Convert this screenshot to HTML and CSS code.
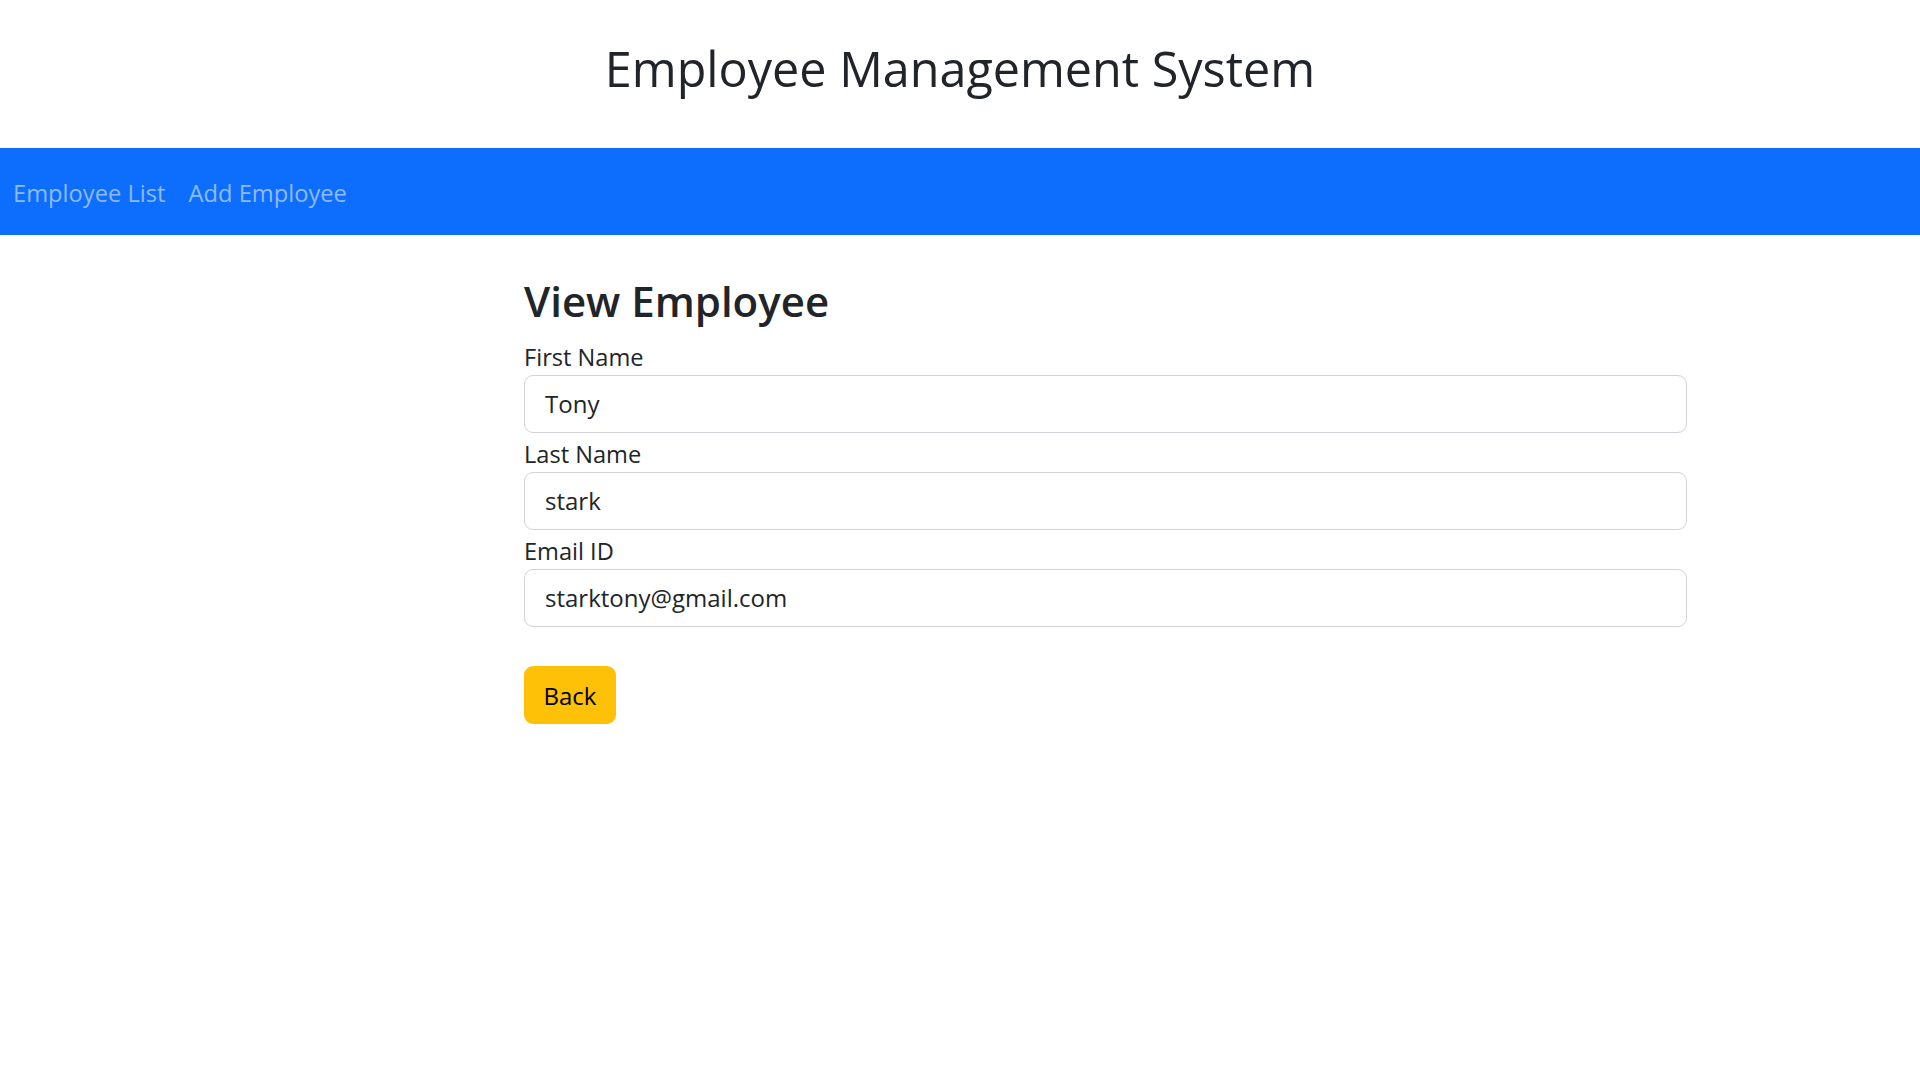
FILE: index.html
```html
<!DOCTYPE html>
<html lang="en">
<head>
<meta charset="utf-8">
<title>Employee Management System</title>
<link rel="stylesheet" href="styles.css">
</head>
<body>
<header class="site-header">
  <h1 class="site-title">Employee Management System</h1>
</header>
<nav class="navbar">
  <a class="nav-link" href="#">Employee List</a>
  <a class="nav-link" href="#">Add Employee</a>
</nav>
<main class="content">
  <h2 class="page-title">View Employee</h2>
  <form class="form">
    <div class="field">
      <label class="form-label">First Name</label>
      <div class="form-control">Tony</div>
    </div>
    <div class="field">
      <label class="form-label">Last Name</label>
      <div class="form-control">stark</div>
    </div>
    <div class="field">
      <label class="form-label">Email ID</label>
      <div class="form-control">starktony@gmail.com</div>
    </div>
    <div class="actions">
      <button type="button" class="btn-back">Back</button>
    </div>
  </form>
</main>
</body>
</html>
```
FILE: styles.css
```css
* { box-sizing: border-box; }
html, body { margin: 0; padding: 0; background: #fff; }
body {
  font-family: "Open Sans", "Noto Sans", sans-serif;
  color: #212529;
}
.site-header {
  height: 148px;
  display: flex;
  justify-content: center;
  padding-top: 39px;
}
.site-title {
  margin: 0;
  font-size: 48.5px;
  line-height: 58px;
  font-weight: 500;
}
.navbar {
  height: 87px;
  background: #0d6efd;
  display: flex;
  align-items: center;
  padding: 2px 0 0 13px;
  gap: 23px;
}
.nav-link {
  color: #8ebafe;
  text-decoration: none;
  font-size: 23.7px;
  line-height: 36px;
}
.content {
  width: 1163px;
  margin-left: 524px;
  padding-top: 39px;
}
.page-title {
  margin: 0 0 9px;
  font-size: 42px;
  line-height: 53px;
  font-weight: 600;
}
.field { display: flex; flex-direction: column; }
.form-label {
  font-size: 23.6px;
  line-height: 36px;
  padding-top: 3px;
}
.form-control {
  height: 58px;
  border: 1px solid #d0d4da;
  border-radius: 9px;
  padding: 0 20px;
  font-size: 24px;
  line-height: 36px;
  display: flex;
  align-items: center;
}
.actions { padding-top: 39px; }
.btn-back {
  width: 92px;
  height: 58px;
  background: #ffc107;
  border: none;
  border-radius: 9px;
  font-family: inherit;
  font-size: 24px;
  color: #000;
  padding: 0;
}
```
